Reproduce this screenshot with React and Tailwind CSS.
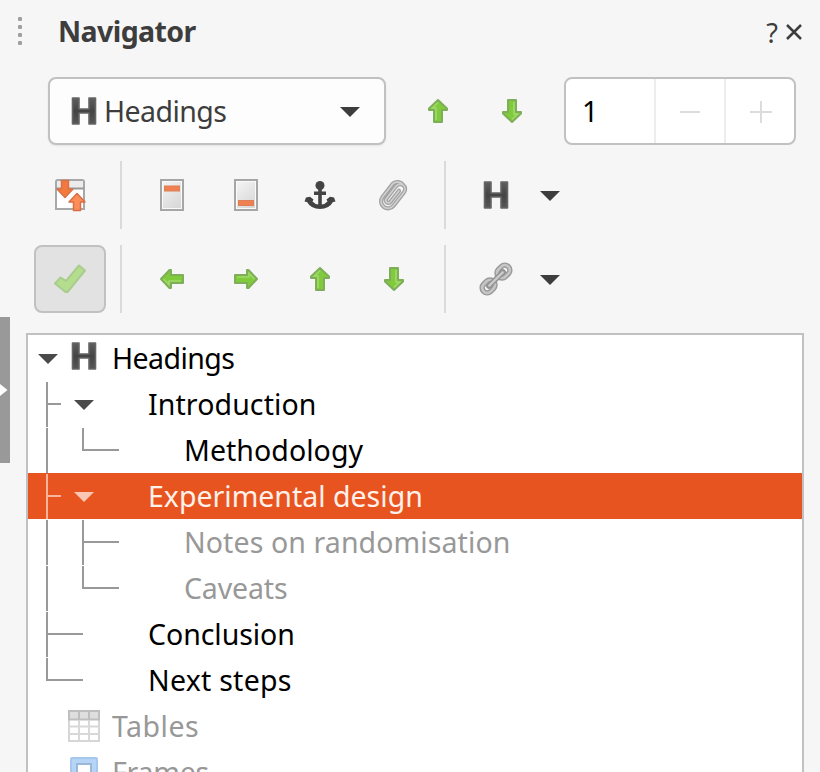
import React from 'react';
import clsx from 'clsx';

// ---------------------------------------------------------------------------
// Icons
// ---------------------------------------------------------------------------

const Caret = ({ className }) => (
  <svg className={clsx('shrink-0', className)} width="20" height="10" viewBox="0 0 20 10">
    <path d="M0 0h20L10 10z" fill="currentColor" />
  </svg>
);

const HeadingIcon = () => (
  <svg className="shrink-0" width="26" height="30" viewBox="0 0 26 30">
    <defs>
      <linearGradient id="heading-fill" x1="0" y1="0" x2="0" y2="1">
        <stop offset="0" stopColor="#5e5e5e" />
        <stop offset="0.5" stopColor="#444" />
        <stop offset="1" stopColor="#565656" />
      </linearGradient>
    </defs>
    <path
      d="M1.500 2h6.500v11h10V2h6.500v26H18V17H8v11H1.500z"
      fill="url(#heading-fill)" stroke="#666" strokeWidth="1.600" strokeLinejoin="round"
    />
  </svg>
);

const rotations = { up: 0, right: 90, down: 180, left: 270 };

const GreenArrow = ({ dir }) => (
  <svg className="shrink-0" width="32" height="32" viewBox="0 0 32 32">
    <g transform={`rotate(${rotations[dir]} 16 16)`}>
      <path
        d="M16 5 L25 13.500 V15 H20 V27 H12 V15 H7 V13.500 Z"
        fill="#80cb3c" stroke="#7fae5a" strokeWidth="2" strokeLinejoin="round"
      />
      <path d="M16 7.500 L10.500 13 H14 V25" fill="none" stroke="#a0da6a" strokeWidth="1.600" />
    </g>
  </svg>
);

const ContentViewIcon = () => (
  <svg width="34" height="34" viewBox="0 0 34 34">
    <path d="M3 31V4q0-2 2-2h24q2 0 2 2v27z" fill="#fff" stroke="#a8a8a8" strokeWidth="2" />
    <path d="M4 3h26v7H4z" fill="#ececec" />
    <path d="M3 10.500h28" stroke="#999" strokeWidth="2" />
    <path d="M8.500 2.500h7V11h4.500L12 19.500 4 11h4.500z" fill="#f5793d" stroke="#d8714a" strokeWidth="1.500" strokeLinejoin="round" />
    <path d="M20.500 32.500h7V24h4.500L24 15.500 16 24h4.500z" fill="#fb8e58" stroke="#dc6d42" strokeWidth="1.500" strokeLinejoin="round" />
  </svg>
);

const PageIcon = ({ footer }) => (
  <svg width="26" height="34" viewBox="0 0 26 34">
    <defs>
      <linearGradient id="page-fill" x1="0" y1="0" x2="0.600" y2="1">
        <stop offset="0" stopColor="#f6f6f6" />
        <stop offset="1" stopColor="#d8d8d8" />
      </linearGradient>
    </defs>
    <rect x="2" y="2" width="22" height="30" fill="url(#page-fill)" stroke="#a6a6a6" strokeWidth="2" />
    <rect x="3.500" y="3.500" width="19" height="27" fill="none" stroke="#fafafa" />
    <rect x="5.500" y={footer ? 22.5 : 8} width="15" height="5" fill="#f08050" stroke="#dc8058" />
  </svg>
);

const AnchorIcon = () => (
  <svg width="32" height="32" viewBox="0 0 32 32">
    <circle cx="16" cy="6.500" r="4.500" fill="#444" />
    <path d="M10 12.500h12v3.500H10zM14.200 9h3.600v18h-3.600z" fill="#444" />
    <path
      d="M0.500 22.500 L2 18.500 L6 17.800 L9.500 20.500 L8.500 22.500 Q11 25.300 14.500 25.500 H17.500 Q21 25.300 23.500 22.500 L22.500 20.500 L26 17.800 L30 18.500 L31.500 22.500 L29 23 Q25 30 16 30 Q7 30 3 23 Z"
      fill="#424242"
    />
  </svg>
);

const clipPath = 'M-7-8V8a7 7 0 0 0 14 0V-9a5 5 0 0 0-10 0V7a2.600 2.600 0 0 0 5.200 0V-7M-7-6a7 7 0 0 1 9-8';

const ClipIcon = () => (
  <svg className="-ml-0.5" width="34" height="34" viewBox="0 0 34 34">
    <g transform="translate(17 17) rotate(38)" fill="none" strokeLinecap="round">
      <path d={clipPath} stroke="#a2a2a2" strokeWidth="4.200" />
      <path d={clipPath} stroke="#d0d0d0" strokeWidth="1.600" />
    </g>
  </svg>
);

const LinkIcon = () => (
  <svg width="34" height="34" viewBox="0 0 34 34">
    <g transform="translate(17 17) rotate(45)" fill="none">
      <rect x="-5" y="-17.500" width="10" height="14" rx="5" stroke="#9a9a9a" strokeWidth="5.500" />
      <rect x="-5" y="3.500" width="10" height="14" rx="5" stroke="#9a9a9a" strokeWidth="5.500" />
      <rect x="-5" y="-17.500" width="10" height="14" rx="5" stroke="#c6c6c6" strokeWidth="2.600" />
      <rect x="-5" y="3.500" width="10" height="14" rx="5" stroke="#c6c6c6" strokeWidth="2.600" />
      <path d="M0-10V10" stroke="#929292" strokeWidth="5.500" strokeLinecap="round" />
      <path d="M0-9.500V9.500" stroke="#cacaca" strokeWidth="2.400" strokeLinecap="round" />
    </g>
  </svg>
);

const CheckIcon = () => (
  <svg width="34" height="32" viewBox="0 0 34 32">
    <path
      d="M2 20.500 L7.500 14.500 L13 17.800 L26 2.500 L32 7.500 L14.500 29 H12.500 Z"
      fill="#b4de8e" stroke="#a9cd8e" strokeWidth="2" strokeLinejoin="round"
    />
  </svg>
);

const TableIcon = () => (
  <svg width="32" height="32" viewBox="0 0 32 32">
    <rect x="1" y="1" width="30" height="30" fill="#fff" stroke="#d6d6d6" strokeWidth="2" />
    <rect x="1" y="1" width="30" height="8.500" fill="#dedede" stroke="#bebebe" strokeWidth="2" />
    <path d="M11 10v21M21 10v21M1 16.500h30M1 24h30" stroke="#d8d8d8" strokeWidth="2" />
    <path d="M11 1v9M21 1v9" stroke="#bebebe" strokeWidth="2" />
  </svg>
);

const FrameIcon = () => (
  <svg width="28" height="32" viewBox="0 0 28 32">
    <rect x="1" y="2" width="26" height="29" rx="1" fill="#b5d4f6" stroke="#a6c8ee" strokeWidth="2" />
    <rect x="7" y="8" width="14" height="17" fill="#fff" stroke="#98b8dc" strokeWidth="2" />
  </svg>
);

// ---------------------------------------------------------------------------
// Tree
// ---------------------------------------------------------------------------

// Connector lines for one 36px indent column
const guidePaths = {
  line: 'M18 1v45',
  tee: 'M18 1v45M18 23h14',
  teeLong: 'M18 1v45M18 23h36',
  end: 'M18 1v22h36',
};

const Guide = ({ kind }) => (
  <svg className="w-9 h-[46px] shrink-0 overflow-visible" viewBox="0 0 36 46">
    {kind && <path d={guidePaths[kind]} fill="none" stroke="currentColor" strokeWidth="2" />}
  </svg>
);

const Expander = () => (
  <span className="flex w-9 shrink-0 justify-center pt-0.5 pl-0.5">
    <Caret />
  </span>
);

const rows = [
  { label: 'Headings', open: true, icon: <HeadingIcon />, track: 'tracking-[-0.550px]' },
  { label: 'Introduction', guides: ['tee'], open: true, spacer: true, track: 'tracking-[0.1px]' },
  { label: 'Methodology', guides: ['line', 'end'], spacer: true, wide: true, track: 'tracking-[0.05px]' },
  { label: 'Experimental design', guides: ['tee'], open: true, spacer: true, selected: true, track: 'tracking-[0px]' },
  { label: 'Notes on randomisation', guides: ['line', 'teeLong'], spacer: true, wide: true, dim: true, track: 'tracking-[0.1px]' },
  { label: 'Caveats', guides: ['line', 'end'], spacer: true, wide: true, dim: true, track: 'tracking-[-0.150px]' },
  { label: 'Conclusion', guides: ['teeLong', null], spacer: true, track: 'tracking-[-0.050px]' },
  { label: 'Next steps', guides: ['end', null], spacer: true, track: 'tracking-[0.250px]' },
  { label: 'Tables', guides: [null], icon: <TableIcon />, dim: true, track: 'tracking-[0.5px]' },
  { label: 'Frames', guides: [null], icon: <FrameIcon />, dim: true, track: 'tracking-[-0.250px]' },
];

const TreeRow = ({ row }) => (
  <div className={clsx('flex h-[46px] shrink-0 items-center pl-px', row.selected && 'bg-[#e75420]')}>
    <div className={clsx('flex items-center', row.selected ? 'text-[#f9b49b]' : 'text-[#999]')}>
      {(row.guides || []).map((kind, i) => <Guide key={i} kind={kind} />)}
    </div>
    {row.open && (
      <div className={row.selected ? 'text-[#fbc7b4]' : 'text-[#4a4a4a]'}><Expander /></div>
    )}
    {row.icon && (
      <span className={clsx('flex w-9 shrink-0 items-center justify-center pl-0.5', row.open && '-mt-1')}>{row.icon}</span>
    )}
    {row.spacer && <span className={clsx('shrink-0', row.wide ? 'w-[72px]' : 'w-9')} />}
    <span
      className={clsx(
        'whitespace-pre pl-[11px]', row.track,
        row.selected ? 'text-[#fff1ea]' : row.dim ? 'text-[#989898]' : 'text-black',
      )}
    >
      {row.label}
    </span>
  </div>
);

// ---------------------------------------------------------------------------
// Toolbars
// ---------------------------------------------------------------------------

const Slot = ({ children }) => (
  <span className="flex h-[68px] w-[74px] items-center justify-center">{children}</span>
);

const Separator = () => <span className="h-[68px] w-0.5 shrink-0 bg-[#dadada]" />;

const Toolbar = ({ first, children, menu }) => (
  <div className="flex h-[68px] items-center pl-6">
    {first}
    <span className="w-[14px] shrink-0" />
    <Separator />
    <div className="flex w-[322px] pl-[13px]">{children}</div>
    <Separator />
    <div className="flex items-center pl-8 text-[#3d3d3d]">
      <span className="flex w-9 justify-center">{menu}</span>
      <Caret className="ml-[26px] mt-0.5" />
    </div>
  </div>
);

const App = () => (
  <div className="flex h-[772px] w-[820px] overflow-hidden bg-[#f6f6f6] font-['Noto_Sans','Open_Sans',sans-serif] text-[28.500px] leading-[46px] text-[#3d3d3d]">
    {/* Collapse handle */}
    <div className="w-[10px] shrink-0 pt-[317px]">
      <div className="flex h-[146px] items-center bg-[#999]">
        <svg width="8" height="14" viewBox="0 0 8 14">
          <path d="M0 1l7.500 6L0 13z" fill="#fff" />
        </svg>
      </div>
    </div>

    <div className="flex w-[810px] flex-col">
      <header className="flex h-[77px] shrink-0 items-start pt-2">
        <div className="flex w-12 flex-col items-start gap-1 pl-2 pt-[9px]">
          {[0, 1, 2, 3].map((i) => <span key={i} className="size-1 rounded-[1px] bg-[#a0a0a0]" />)}
        </div>
        <h1 className="font-bold tracking-[-0.6px]">Navigator</h1>
        <div className="ml-auto flex items-center pr-[17px]">
          <span className="pr-[7px] pt-0.5 text-[27px]">?</span>
          <svg width="18" height="18" viewBox="0 0 18 18">
            <path d="M2 2l14 14M16 2L2 16" stroke="#3d3d3d" strokeWidth="2.500" />
          </svg>
        </div>
      </header>

      <div className="flex h-[68px] shrink-0 items-center pl-[38px]">
        <div className="flex h-[68px] w-[338px] items-center rounded-lg border-2 border-[#c1c1c1] bg-[#fdfdfd] pl-[21px] pr-6 shadow-[0_1px_2px_rgba(0,0,0,0.08)]">
          <HeadingIcon />
          <span className="pl-[7px] tracking-[-0.550px]">Headings</span>
          <Caret className="ml-auto mt-0.5" />
        </div>
        <div className="flex pl-[15px]">
          <Slot><GreenArrow dir="up" /></Slot>
          <Slot><GreenArrow dir="down" /></Slot>
        </div>
        <div className="ml-[15px] flex h-[68px] w-[232px] items-center overflow-hidden rounded-lg border-2 border-[#c1c1c1] bg-white text-[#dcdcdc]">
          <span className="w-[88px] pl-4 text-black">1</span>
          <span className="flex h-full w-[70px] items-center justify-center border-l-2 border-[#ededed] pt-0.5">
            <svg width="22" height="22" viewBox="0 0 22 22">
              <path d="M1 11h20" stroke="currentColor" strokeWidth="2" />
            </svg>
          </span>
          <span className="flex h-full w-[70px] items-center justify-center border-l-2 border-[#ededed] pl-0.5 pt-0.5">
            <svg width="22" height="22" viewBox="0 0 22 22">
              <path d="M0 11h22M11 0v22" stroke="currentColor" strokeWidth="2" />
            </svg>
          </span>
        </div>
      </div>

      <div className="flex shrink-0 flex-col gap-4 py-4">
        <Toolbar
          first={<span className="flex w-[72px] justify-center"><ContentViewIcon /></span>}
          menu={<HeadingIcon />}
        >
          <Slot><PageIcon /></Slot>
          <Slot><PageIcon footer /></Slot>
          <Slot><AnchorIcon /></Slot>
          <Slot><ClipIcon /></Slot>
        </Toolbar>
        <Toolbar
          first={(
            <span className="flex h-[68px] w-[72px] items-center justify-center rounded-lg border-2 border-[#c1c1c1] bg-[#e2e2e2]">
              <CheckIcon />
            </span>
          )}
          menu={<LinkIcon />}
        >
          <Slot><GreenArrow dir="left" /></Slot>
          <Slot><GreenArrow dir="right" /></Slot>
          <Slot><GreenArrow dir="up" /></Slot>
          <Slot><GreenArrow dir="down" /></Slot>
        </Toolbar>
      </div>

      <div className="ml-4 mt-1 flex h-[480px] w-[778px] shrink-0 flex-col border-2 border-[#c1c1c1] bg-white">
        {rows.map((row) => <TreeRow key={row.label} row={row} />)}
      </div>
    </div>
  </div>
);

export default App;
